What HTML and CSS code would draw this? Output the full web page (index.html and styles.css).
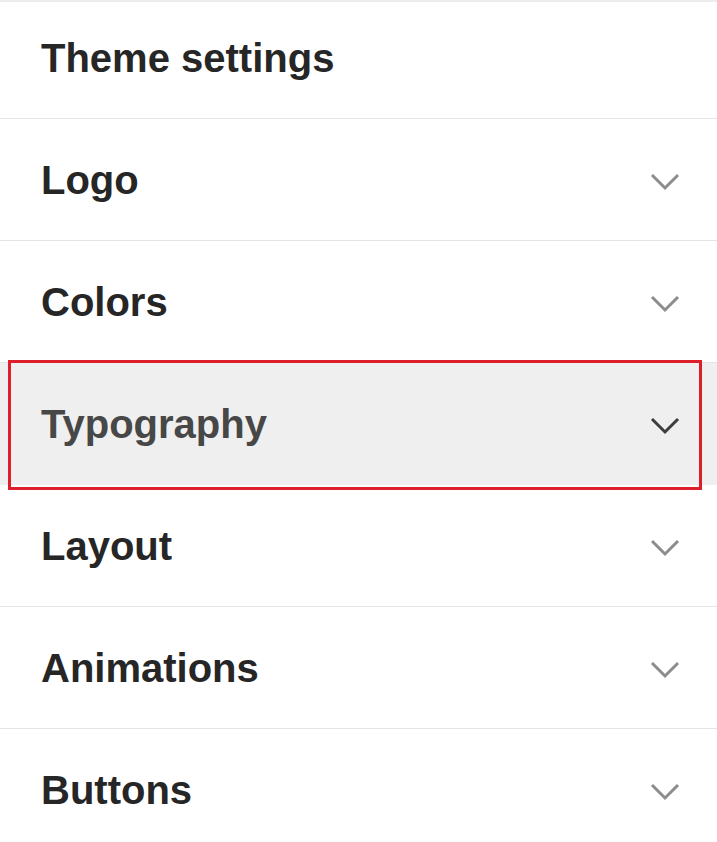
FILE: index.html
```html
<!DOCTYPE html>
<html lang="en">
<head>
<meta charset="utf-8">
<title>Theme settings</title>
<link rel="stylesheet" href="styles.css">
</head>
<body>
<div class="panel">
  <div class="panel-header">
    <h1 class="panel-title">Theme settings</h1>
  </div>
  <div class="row">
    <span class="row-label">Logo</span>
    <svg class="chevron" viewBox="0 0 30 18" width="30" height="18"><polyline points="2,2 15,15 28,2"/></svg>
  </div>
  <div class="row">
    <span class="row-label">Colors</span>
    <svg class="chevron" viewBox="0 0 30 18" width="30" height="18"><polyline points="2,2 15,15 28,2"/></svg>
  </div>
  <div class="row row-active">
    <span class="row-label">Typography</span>
    <svg class="chevron" viewBox="0 0 30 18" width="30" height="18"><polyline points="2,2 15,15 28,2"/></svg>
    <div class="annotation"></div>
  </div>
  <div class="row">
    <span class="row-label">Layout</span>
    <svg class="chevron" viewBox="0 0 30 18" width="30" height="18"><polyline points="2,2 15,15 28,2"/></svg>
  </div>
  <div class="row">
    <span class="row-label">Animations</span>
    <svg class="chevron" viewBox="0 0 30 18" width="30" height="18"><polyline points="2,2 15,15 28,2"/></svg>
  </div>
  <div class="row">
    <span class="row-label">Buttons</span>
    <svg class="chevron" viewBox="0 0 30 18" width="30" height="18"><polyline points="2,2 15,15 28,2"/></svg>
  </div>
</div>
</body>
</html>
```

FILE: styles.css
```css
html, body {
  margin: 0;
  padding: 0;
  background: #ffffff;
}

body {
  font-family: "Liberation Sans", Arial, sans-serif;
  overflow: hidden;
}

.panel {
  display: flex;
  flex-direction: column;
  border-top: 2px solid #ececec;
}

.panel-header {
  height: 116px;
  display: flex;
  align-items: center;
  padding-left: 41px;
  border-bottom: 1px solid #e4e4e4;
}

.panel-title {
  margin: 0;
  font-size: 40px;
  font-weight: 700;
  color: #262626;
  line-height: 1;
  padding-bottom: 4px;
}

.row {
  position: relative;
  height: 121px;
  display: flex;
  align-items: center;
  justify-content: space-between;
  padding: 0 37px 0 41px;
  border-bottom: 1px solid #e4e4e4;
  flex-shrink: 0;
}

.row-label {
  font-size: 40px;
  font-weight: 700;
  color: #262626;
  line-height: 1;
}

.chevron {
  fill: none;
  stroke: #8c8c8c;
  stroke-width: 3;
  stroke-linecap: butt;
  stroke-linejoin: miter;
  margin-top: 4px;
}

.row-active {
  background: #efefef;
  border-bottom-color: #efefef;
}

.row-active .row-label {
  color: #474747;
}

.row-active .chevron {
  stroke: #3d3d3d;
}

.annotation {
  position: absolute;
  left: 8px;
  right: 15px;
  top: -3px;
  bottom: -6px;
  border: 3.5px solid #dc1f2b;
  pointer-events: none;
}
```
